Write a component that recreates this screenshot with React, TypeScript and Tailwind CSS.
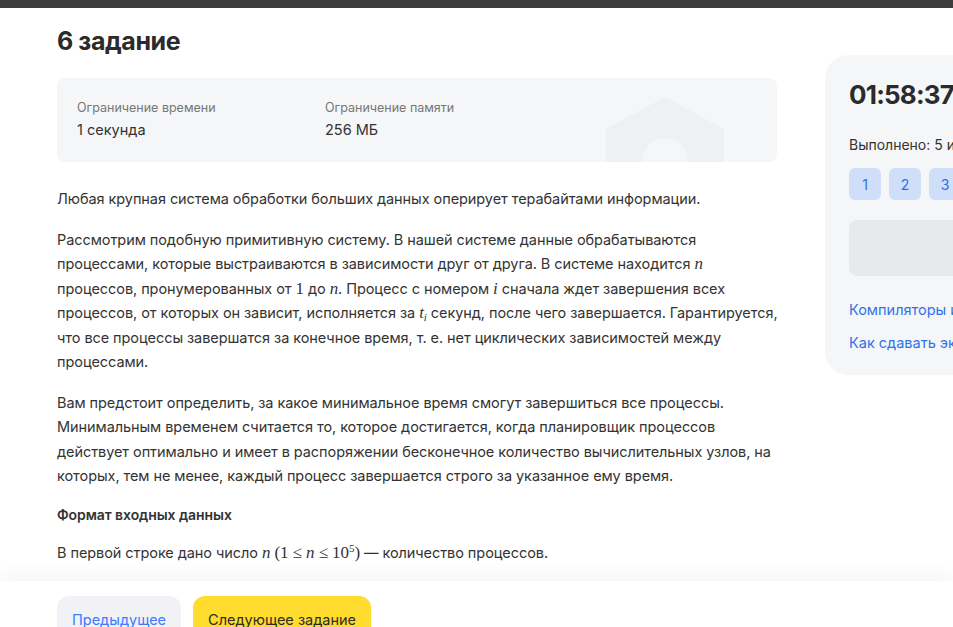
import React from 'react';

const M = ({ children }: { children: React.ReactNode }) => (
  <span className="font-['Liberation_Serif',serif] text-[17px] leading-none italic">{children}</span>
);
const R = ({ children }: { children: React.ReactNode }) => (
  <span className="font-['Liberation_Serif',serif] text-[17px] leading-none">{children}</span>
);

export default function App() {
  return (
    <div className="w-[953px] h-[627px] overflow-hidden flex flex-col bg-white text-[#333] font-['Inter',sans-serif]">
      <div className="h-2 bg-[#3d3d3d] shrink-0" />
      <div className="flex-1 overflow-hidden flex gap-12 pl-[57px]">
        <main className="w-[720px] shrink-0 pt-[17px]">
          <h1 className="text-[25px] leading-8 font-bold tracking-[-0.4px] text-[#2b2b2b]">6 задание</h1>

          <div className="relative mt-[21px] h-[84px] rounded-lg bg-[#f5f6f8] overflow-hidden px-5 pt-[22px] flex">
            <div className="w-[248px]">
              <div className="text-[12.5px] leading-4 text-[#777]">Ограничение времени</div>
              <div className="mt-1 text-[14.5px] leading-5">1 секунда</div>
            </div>
            <div>
              <div className="text-[12.5px] leading-4 text-[#777]">Ограничение памяти</div>
              <div className="mt-1 text-[14.5px] leading-5">256 МБ</div>
            </div>
            <svg className="absolute left-[549px] top-[19px]" width="118" height="70" viewBox="0 0 118 70">
              <path d="M0 32 L59 0 L118 32 L118 70 L0 70 Z" fill="#eff0f2" />
              <circle cx="59" cy="64" r="23" fill="#f5f6f8" />
            </svg>
          </div>

          <div className="mt-[25px] text-[14.5px] leading-[24.5px] tracking-[-0.07px] space-y-4">
            <p>Любая крупная система обработки больших данных оперирует терабайтами информации.</p>
            <p className="w-[740px]">
              Рассмотрим подобную примитивную систему. В нашей системе данные обрабатываются
              <br />
              процессами, которые выстраиваются в зависимости друг от друга. В системе находится <M>n</M>
              <br />
              процессов, пронумерованных от <R>1</R> до <M>n</M>. Процесс с номером <M>i</M> сначала ждет
              завершения всех
              <br />
              процессов, от которых он зависит, исполняется за{' '}
              <M>
                t<sub className="text-[11px] leading-none">i</sub>
              </M>{' '}
              секунд, после чего завершается. Гарантируется,
              <br />
              что все процессы завершатся за конечное время, т. е. нет циклических зависимостей между
              <br />
              процессами.
            </p>
            <p>
              Вам предстоит определить, за какое минимальное время смогут завершиться все процессы.
              Минимальным временем считается то, которое достигается, когда планировщик процессов действует
              оптимально и имеет в распоряжении бесконечное количество вычислительных узлов, на которых, тем
              не менее, каждый процесс завершается строго за указанное ему время.
            </p>
            <p className="text-[14px] leading-5 font-semibold">Формат входных данных</p>
            <p>
              В первой строке дано число <M>n</M>{' '}
              <R>
                (1 ≤ <i>n</i> ≤ 10<sup className="text-[11px] leading-none">5</sup>)
              </R>{' '}
              — количество процессов.
            </p>
          </div>
        </main>

        <aside className="w-[300px] shrink-0 pt-[47px]">
          <div className="rounded-3xl bg-[#f5f6f8] p-6 pb-[22px]">
            <div className="text-[26px] leading-8 font-bold tracking-[-0.8px] text-[#2b2b2b]">01:58:37</div>
            <div className="mt-6 text-[14px] leading-5 whitespace-nowrap">Выполнено: 5 из 6</div>
            <div className="mt-[13px] flex gap-2">
              {['1', '2', '3', '4', '5', '6'].map((n) => (
                <div key={n} className="w-8 h-8 rounded-md bg-[#cfdffa] text-[#2e6fe8] text-[14px] flex items-center justify-center">
                  {n}
                </div>
              ))}
            </div>
            <div className="mt-5 h-14 rounded-lg bg-[#e8e9ec]" />
            <div className="mt-6 text-[14.5px] leading-5 text-[#2f73e8] whitespace-nowrap">Компиляторы и настройки</div>
            <div className="mt-[13px] text-[14.5px] leading-5 text-[#2f73e8] whitespace-nowrap">Как сдавать экзамен</div>
          </div>
        </aside>
      </div>
      <footer className="h-[46px] shrink-0 bg-white shadow-[0_-10px_16px_rgba(0,0,0,0.03)] pl-[57px] pt-[15px] flex gap-3 items-start">
        <button className="h-12 px-[15px] rounded-xl bg-[#f1f2f6] text-[#3a7bff] text-[14.5px]">Предыдущее</button>
        <button className="h-12 px-[15px] rounded-xl bg-[#ffdc2e] text-[#2b2b2b] text-[14.5px]">Следующее задание</button>
      </footer>
    </div>
  );
}
